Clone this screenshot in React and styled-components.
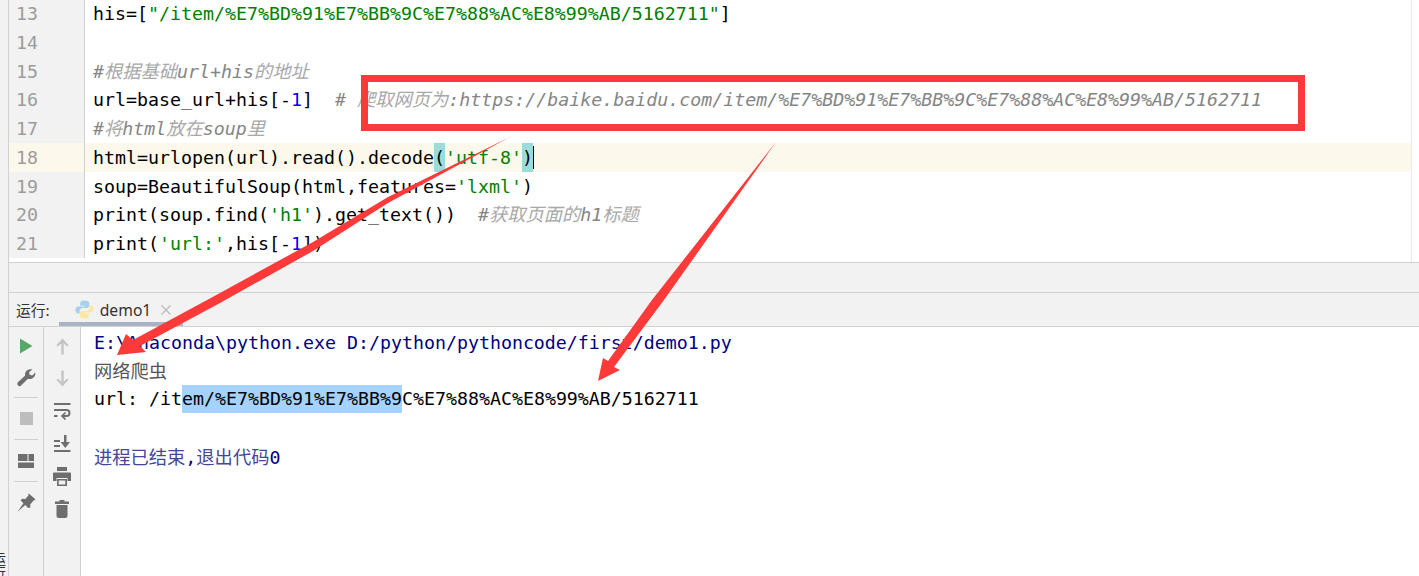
import React from 'react';
import styled, { createGlobalStyle } from 'styled-components';

const Global = createGlobalStyle`
  html, body { margin: 0; padding: 0; background: #fff; overflow: hidden; }
  #root { width: 1419px; height: 576px; }
`;

const MONO = `"DejaVu Sans Mono", "Noto Sans CJK SC", monospace`;
const BORDER = '#d1d1d1';

const Screen = styled.div`
  position: relative;
  width: 1419px;
  height: 576px;
  display: flex;
  overflow: hidden;
  background: #f2f2f2;
  font-family: ${MONO};
  font-size: 18.27px;
`;
const LeftStrip = styled.aside`
  width: 8px;
  flex: none;
  display: flex;
  flex-direction: column;
  justify-content: flex-end;
  overflow: hidden;
  border-right: 1px solid ${BORDER};
  box-sizing: content-box;
`;
const StripLabel = styled.span`
  display: block;
  font: 14px "Noto Sans CJK SC", sans-serif;
  line-height: 18px;
  margin: 0 0 -4px -15px;
  color: #334;
  writing-mode: vertical-rl;
`;
const Main = styled.div`
  flex: 1;
  min-width: 0;
  display: flex;
  flex-direction: column;
`;
const Editor = styled.section`
  height: 262px;
  flex: none;
  display: flex;
  overflow: hidden;
  background: #fff;
  border-bottom: 1px solid ${BORDER};
`;
const EditorBody = styled.div`
  flex: 1;
  margin-top: -1px;
`;
const Row = styled.div`
  display: flex;
  height: 28.75px;
  line-height: 30.75px;
  background: ${p => (p.$active ? '#fcf9ec' : 'transparent')};
`;
const LineNo = styled.div`
  width: 76px;
  flex: none;
  box-sizing: border-box;
  padding-left: 7px;
  color: #9c9c9c;
  background: ${p => (p.$active ? '#fcf9ec' : '#f2f2f2')};
  border-right: 1px solid ${BORDER};
`;
const Code = styled.div`
  flex: 1;
  padding-left: 8px;
  white-space: pre;
  color: #000;
`;
const Scroll = styled.div`
  width: 7px;
  flex: none;
  border-left: 1px solid #e8e8e8;
`;
const Str = styled.span`color: #008000;`;
const Num = styled.span`color: #0000ff;`;
const Comment = styled.span`
  color: #858585;
  font-style: italic;
`;
const CommentCjk = styled.span`color: #a8a8a8;`;
const Brace = styled.span`
  display: inline-block;
  height: 28.75px;
  background: #99dcdc;
`;
const Caret = styled.span`
  display: inline-block;
  width: 1.5px;
  height: 23px;
  margin-bottom: -5px;
  background: #000;
`;
const Spacer = styled.div`
  height: 29px;
  flex: none;
`;
const RunHeader = styled.header`
  height: 33px;
  flex: none;
  display: flex;
  align-items: center;
  box-sizing: content-box;
  border-top: 1px solid ${BORDER};
  border-bottom: 1px solid ${BORDER};
  font-family: "Noto Sans", sans-serif;
  color: #333;
`;
const RunLabel = styled.span`
  margin-left: 7px;
  font: 14.8px "Noto Sans CJK SC", sans-serif;
`;
const Tab = styled.div`
  margin-left: 9px;
  width: 124px;
  height: 33px;
  box-sizing: border-box;
  padding: 4px 0 0 16px;
  display: flex;
  align-items: center;
  gap: 6px;
  font-size: 15.7px;
  border-bottom: 4px solid #a9b3c5;
`;
const Close = styled.span`
  display: flex;
  margin-left: 4px;
`;
const RunBody = styled.section`
  flex: 1;
  display: flex;
  min-height: 0;
`;
const ToolColumn = styled.div`
  flex: none;
  width: ${p => p.$w}px;
  box-sizing: border-box;
  padding-top: 3px;
  display: flex;
  flex-direction: column;
  align-items: center;
  border-right: 1px solid ${BORDER};
`;
const Slot = styled.div`
  height: ${p => p.$h}px;
  width: 100%;
  flex: none;
  display: flex;
  align-items: center;
  justify-content: center;
`;
const Sep = styled.div`
  width: 24px;
  height: 1px;
  flex: none;
  margin: 5px 0;
  background: ${BORDER};
`;
const Console = styled.div`
  flex: 1;
  background: #fff;
  padding: 2px 0 0 13px;
  white-space: pre;
  line-height: 28.8px;
`;
const ConsoleLine = styled.div`
  height: 28.8px;
  color: ${p => p.$color || '#000'};
`;
const UrlLine = styled.div`
  height: 30.4px;
  margin-top: -1.6px;
  line-height: 28px;
  color: #000;
`;
const ThinCjk = styled.span`color: ${p => p.$color};`;
const Selected = styled.span`
  display: inline-block;
  height: 28px;
  background: #a6d2ff;
`;
const Highlight = styled.div`
  position: absolute;
  left: 361px;
  top: 75px;
  width: 944px;
  height: 56px;
  box-sizing: border-box;
  border: 7px solid #fd3a3a;
`;
const Overlay = styled.svg`
  position: absolute;
  left: 0;
  top: 0;
  pointer-events: none;
`;

const Play = () => <svg width="14" height="16" viewBox="0 0 14 16"><path d="M1 0.5 13.5 8 1 15.5Z" fill="#59a869" /></svg>;
const Wrench = () => (
  <svg width="20" height="20" viewBox="0 0 20 20">
    <path d="M1.3 15.8 9.2 8.6C8.5 5.4 10.6 2.5 14 2.2c.9-.1 1.6 0 2.3.3l-3.2 2.7.6 2.6 2.6.7 3-2.9c.4 2.9-1.2 5.6-4.3 6.3-1.2.2-2.2.1-3-.2l-7.5 7.2c-.6.5-1.3.5-1.9.1l-.8-.8c-.6-.7-.6-1.6 0-2.4Z" fill="#6e6e6e" />
  </svg>
);
const Stop = () => <svg width="13" height="13"><rect width="13" height="13" fill="#bdbdbd" /></svg>;
const LayoutIcon = () => (
  <svg width="16" height="14" viewBox="0 0 16 14" fill="#6e6e6e">
    <rect width="9.5" height="7" /><rect x="10.5" width="5.5" height="7" /><rect y="8.5" width="16" height="5.5" />
  </svg>
);
const Pin = () => (
  <svg width="19" height="19" viewBox="0 0 19 19">
    <path d="M11.5.3 18.6 6.6l-2 .8-3.4 4.2.2 3-2.2.3-2.9-3L.6 18.7l5.8-8.5L3.7 7.6 5 5.8l3.2.1 3.2-3.3Z" fill="#6e6e6e" />
  </svg>
);
const Up = () => <svg width="13" height="17" viewBox="0 0 13 17"><path d="M6.5.5 12.6 7.2 11 8.6 7.7 5.2V16.5H5.3V5.2L2 8.6.4 7.2Z" fill="#c4c4c4" /></svg>;
const Down = () => <svg width="13" height="17" viewBox="0 0 13 17"><path d="M6.5 16.5 12.6 9.8 11 8.4 7.7 11.8V.5H5.3V11.8L2 8.4.4 9.8Z" fill="#c4c4c4" /></svg>;
const WrapIcon = () => (
  <svg width="17" height="18" viewBox="0 0 17 18" fill="none" stroke="#6e6e6e" strokeWidth="2">
    <path d="M0 2H16.500" />
    <path d="M0 8H12.500C16.500 8 16.500 14 12.500 14H9" />
    <path d="M0 14H3.500" />
    <path d="M11.500 10.500 8 14l3.500 3.500" strokeWidth="1.700" />
  </svg>
);
const EndIcon = () => (
  <svg width="17" height="18" viewBox="0 0 17 18" fill="#6e6e6e">
    <rect x="0" y="15" width="16.500" height="2" />
    <rect x="0" y="5" width="6" height="2" />
    <rect x="0" y="10" width="6" height="2" />
    <path d="M10 0h2.500v7H16l-4.700 6L6.700 7H10Z" />
  </svg>
);
const Printer = () => (
  <svg width="18" height="19" viewBox="0 0 18 19" fill="#6e6e6e">
    <rect x="4" y="0" width="10" height="4" />
    <path d="M1 5.500H17a1 1 0 0 1 1 1V14H14.500V11h-11V14H0V6.500a1 1 0 0 1 1-1Z" />
    <path d="M4 12H14V19H4ZM5.700 13.600V17.400H12.300V13.600Z" fillRule="evenodd" />
  </svg>
);
const Trash = () => (
  <svg width="14" height="18" viewBox="0 0 14 18" fill="#6e6e6e">
    <rect x="4.500" y="0" width="5" height="2" />
    <rect x="0" y="1.500" width="14" height="2.500" />
    <path d="M1.500 5H12.500V16a2 2 0 0 1-2 2h-7a2 2 0 0 1-2-2Z" />
  </svg>
);
const PyIcon = () => (
  <svg width="19" height="19" viewBox="0 0 19 19">
    <path d="M9.400.6C5.600.6 5.200 2.100 5.200 3.600v2.100h4.400v.7H3.300C1.500 6.400.4 7.800.4 10s1 3.500 2.600 3.500h1.600v-2.200c0-1.700 1.500-3.200 3.200-3.200h4.100c1.400 0 2.500-1.100 2.500-2.600V3.400C14.400 1.700 13 .6 9.400.6Z" fill="#a9d1ea" />
    <path d="M9.600 18.400c3.800 0 4.200-1.500 4.200-3v-2.100H9.400v-.7h6.300c1.800 0 2.900-1.400 2.900-3.600s-1-3.500-2.600-3.500h-1.600v2.200c0 1.700-1.500 3.200-3.200 3.200H7.100c-1.400 0-2.500 1.100-2.500 2.600v2.100c0 1.700 1.400 2.800 5 2.800Z" fill="#fbe7a3" />
  </svg>
);
const CloseIcon = () => (
  <svg width="10" height="10" viewBox="0 0 10 10"><path d="M.5.500 9.500 9.500M9.500.500.5 9.500" stroke="#bcbcbc" strokeWidth="1.300" /></svg>
);

const URL_PATH = '/item/%E7%BD%91%E7%BB%9C%E7%88%AC%E8%99%AB/5162711';
const codeLines = [
  { n: 13, c: <>his=[<Str>"{URL_PATH}"</Str>]</> },
  { n: 14, c: '' },
  { n: 15, c: <Comment>#<CommentCjk>根据基础</CommentCjk>url+his<CommentCjk>的地址</CommentCjk></Comment> },
  { n: 16, c: <>url=base_url+his[-<Num>1</Num>]  <Comment># <CommentCjk>爬取网页为</CommentCjk>:https://baike.baidu.com{URL_PATH}</Comment></> },
  { n: 17, c: <Comment>#<CommentCjk>将</CommentCjk>html<CommentCjk>放在</CommentCjk>soup<CommentCjk>里</CommentCjk></Comment> },
  { n: 18, active: true, c: <>html=urlopen(url).read().decode<Brace>(</Brace><Str>'utf-8'</Str><Brace>)</Brace><Caret /></> },
  { n: 19, c: <>soup=BeautifulSoup(html,features=<Str>'lxml'</Str>)</> },
  { n: 20, c: <>print(soup.find(<Str>'h1'</Str>).get_text())  <Comment>#<CommentCjk>获取页面的</CommentCjk>h1<CommentCjk>标题</CommentCjk></Comment></> },
  { n: 21, c: <>print(<Str>'url:'</Str>,his[-<Num>1</Num>])</> },
];

export default function App() {
  return (
    <Screen>
      <Global />
      <LeftStrip><StripLabel>运行</StripLabel></LeftStrip>
      <Main>
        <Editor>
          <EditorBody>
            {codeLines.map(l => (
              <Row key={l.n} $active={l.active}>
                <LineNo $active={l.active}>{l.n}</LineNo>
                <Code>{l.c}</Code>
              </Row>
            ))}
          </EditorBody>
          <Scroll />
        </Editor>
        <Spacer />
        <RunHeader>
          <RunLabel>运行:</RunLabel>
          <Tab><PyIcon />demo1<Close><CloseIcon /></Close></Tab>
        </RunHeader>
        <RunBody>
          <ToolColumn $w={35}>
            <Slot $h={31}><Play /></Slot>
            <Slot $h={31}><Wrench /></Slot>
            <Sep />
            <Slot $h={31}><Stop /></Slot>
            <Sep />
            <Slot $h={31}><LayoutIcon /></Slot>
            <Sep />
            <Slot $h={30}><Pin /></Slot>
          </ToolColumn>
          <ToolColumn $w={37}>
            <Slot $h={32.6}><Up /></Slot>
            <Slot $h={32.6}><Down /></Slot>
            <Slot $h={32.6}><WrapIcon /></Slot>
            <Slot $h={32.6}><EndIcon /></Slot>
            <Slot $h={32.6}><Printer /></Slot>
            <Slot $h={32.6}><Trash /></Slot>
          </ToolColumn>
          <Console>
            <ConsoleLine $color="#000080">E:\Anaconda\python.exe D:/python/pythoncode/first/demo1.py</ConsoleLine>
            <ConsoleLine $color="#555">网络爬虫</ConsoleLine>
            <UrlLine>url: /it<Selected>em/%E7%BD%91%E7%BB%9</Selected>C%E7%88%AC%E8%99%AB/5162711</UrlLine>
            <ConsoleLine />
            <ConsoleLine $color="#000080"><ThinCjk $color="#45459c">进程已结束</ThinCjk>,<ThinCjk $color="#45459c">退出代码</ThinCjk>0</ConsoleLine>
          </Console>
        </RunBody>
      </Main>
      <Highlight />
      <Overlay width="1419" height="576" viewBox="0 0 1419 576">
        <path d="M512 136 388 203 313 251 220 303 140 346 146 352 117 355 126 334 133 340 220 293 313 242 388 197Z" fill="#fd3a3a" />
        <path d="M776 142 664 300 614 367 620 370 598 381 603 358 608 361 652 300Z" fill="#fd3a3a" />
      </Overlay>
    </Screen>
  );
}
